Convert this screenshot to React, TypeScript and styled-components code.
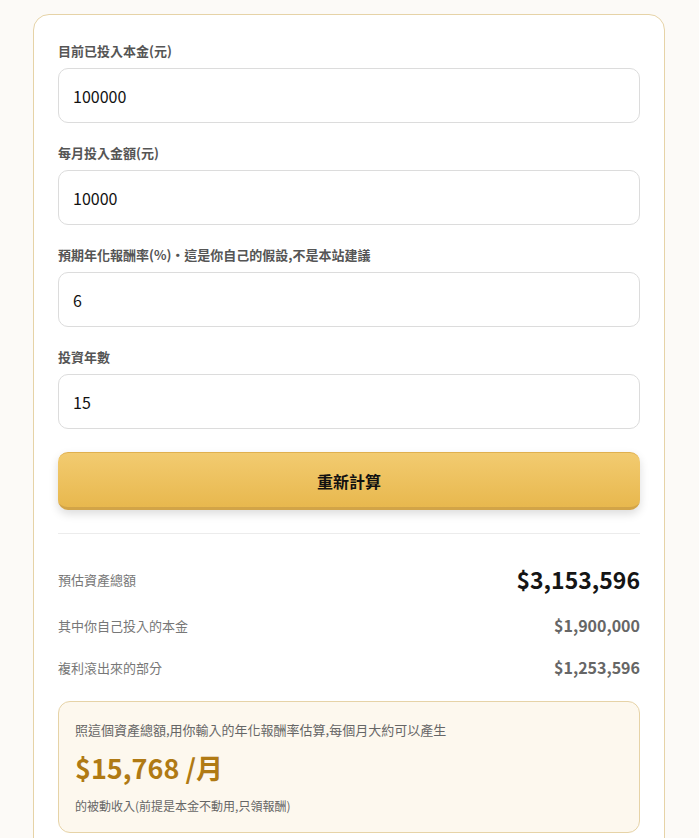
import React from "react";
import styled, { createGlobalStyle } from "styled-components";

const Global = createGlobalStyle`
  html, body { margin: 0; padding: 0; background: #fcfaf7; }
  body { font-family: "Noto Sans CJK TC", "Noto Sans", sans-serif; }
  * { box-sizing: border-box; }
`;

const Card = styled.div`
  width: 632px;
  margin: 14px 0 0 33px;
  background: #ffffff;
  border: 1px solid #e6d3a7;
  border-radius: 16px;
  padding: 26px 24px 24px;
  display: flex;
  flex-direction: column;
`;

const Fields = styled.div`
  display: flex;
  flex-direction: column;
  gap: 20px;
`;

const Field = styled.label`
  display: flex;
  flex-direction: column;
  gap: 8px;
`;

const Label = styled.span`
  font-size: 13px;
  line-height: 19px;
  font-weight: 700;
  color: #555555;
`;

const Input = styled.input`
  height: 55px;
  border: 1px solid #dcdcdc;
  border-radius: 10px;
  padding: 0 14px;
  font-family: "Noto Sans CJK TC", "Noto Sans", sans-serif;
  font-size: 16px;
  color: #111111;
  background: #ffffff;
  outline: none;
`;

const Button = styled.button`
  margin-top: 23px;
  height: 58px;
  border: none;
  border-top: 1px solid #e0b04e;
  border-bottom: 3px solid #d2a448;
  border-radius: 10px;
  padding: 2px 0 0;
  background: linear-gradient(180deg, #f2cb70 0%, #e8b84e 100%);
  box-shadow: 0 4px 10px rgba(0, 0, 0, 0.14);
  font-family: "Noto Sans CJK TC", "Noto Sans", sans-serif;
  font-size: 16px;
  font-weight: 700;
  color: #111111;
  cursor: pointer;
`;

const Divider = styled.hr`
  margin: 23px 0 0;
  border: none;
  border-top: 1px solid #ececec;
`;

const Results = styled.div`
  display: flex;
  flex-direction: column;
  gap: 17px;
  padding-top: 28px;
`;

const Row = styled.div`
  display: flex;
  align-items: center;
  justify-content: space-between;
`;

const RowLabel = styled.span`
  font-size: 13px;
  color: #777777;
`;

const RowValue = styled.span<{ $big?: boolean }>`
  font-weight: 700;
  font-size: ${(p) => (p.$big ? "23px" : "16px")};
  line-height: ${(p) => (p.$big ? "34px" : "25px")};
  color: ${(p) => (p.$big ? "#151515" : "#666666")};
`;

const Box = styled.div`
  margin-top: 21px;
  background: #fdf8ee;
  border: 1px solid #e6d3a7;
  border-radius: 12px;
  padding: 18px 16px 17px;
  display: flex;
  flex-direction: column;
`;

const BoxText = styled.p<{ $small?: boolean }>`
  margin: 0;
  font-size: ${(p) => (p.$small ? "12px" : "13px")};
  line-height: ${(p) => (p.$small ? "18px" : "20px")};
  color: #666666;
`;

const Monthly = styled.div`
  margin: 9px 0 10px;
  font-size: 27px;
  line-height: 38px;
  font-weight: 700;
  color: #b07a14;
`;

export default function App() {
  return (
    <>
      <Global />
      <Card>
        <Fields>
          <Field>
            <Label>目前已投入本金(元)</Label>
            <Input defaultValue="100000" />
          </Field>
          <Field>
            <Label>每月投入金額(元)</Label>
            <Input defaultValue="10000" />
          </Field>
          <Field>
            <Label>預期年化報酬率(%)・這是你自己的假設,不是本站建議</Label>
            <Input defaultValue="6" />
          </Field>
          <Field>
            <Label>投資年數</Label>
            <Input defaultValue="15" />
          </Field>
        </Fields>
        <Button>重新計算</Button>
        <Divider />
        <Results>
          <Row>
            <RowLabel>預估資產總額</RowLabel>
            <RowValue $big>$3,153,596</RowValue>
          </Row>
          <Row>
            <RowLabel>其中你自己投入的本金</RowLabel>
            <RowValue>$1,900,000</RowValue>
          </Row>
          <Row>
            <RowLabel>複利滾出來的部分</RowLabel>
            <RowValue>$1,253,596</RowValue>
          </Row>
        </Results>
        <Box>
          <BoxText>照這個資產總額,用你輸入的年化報酬率估算,每個月大約可以產生</BoxText>
          <Monthly>$15,768 /月</Monthly>
          <BoxText $small>的被動收入(前提是本金不動用,只領報酬)</BoxText>
        </Box>
      </Card>
    </>
  );
}
